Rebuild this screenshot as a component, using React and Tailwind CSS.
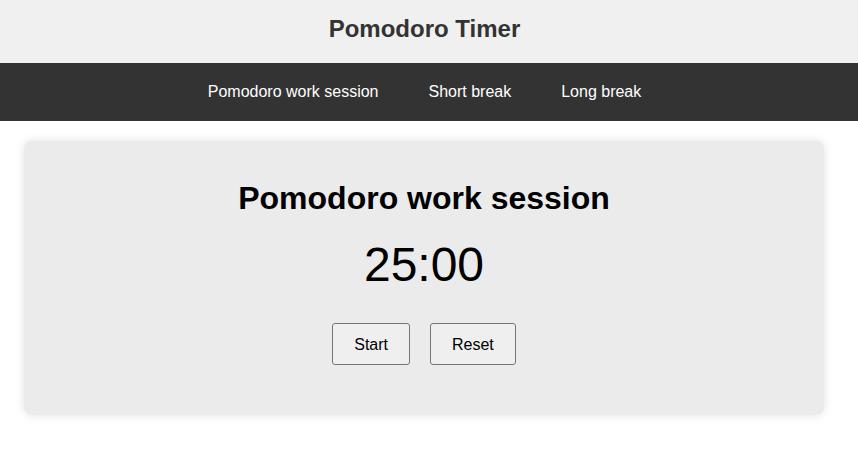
import React, { useState } from 'react';

const modes = [
  { key: 'work', label: 'Pomodoro work session', minutes: 25 },
  { key: 'short', label: 'Short break', minutes: 5 },
  { key: 'long', label: 'Long break', minutes: 15 },
];

const fmt = (s) => {
  const m = Math.floor(s / 60);
  const r = s % 60;
  return `${String(m).padStart(2, '0')}:${String(r).padStart(2, '0')}`;
};

export default function App() {
  const [mode, setMode] = useState(modes[0]);
  const [left, setLeft] = useState(modes[0].minutes * 60);

  const pick = (m) => {
    setMode(m);
    setLeft(m.minutes * 60);
  };

  return (
    <div className="min-h-screen bg-white font-['Liberation_Sans',Arial,sans-serif] text-black">
      {/* header */}
      <header className="h-[63px] bg-[#f0f0f0] pt-[15px] pr-[9px] text-center">
        <h1 className="text-[24px] leading-[28px] font-bold text-[#333333]">Pomodoro Timer</h1>
      </header>

      {/* nav */}
      <nav className="h-[58px] bg-[#333333] pt-[17px]">
        <ul className="flex justify-center gap-[50px] pr-[9px]">
          {modes.map((m) => (
            <li key={m.key}>
              <a
                href="#"
                onClick={(e) => { e.preventDefault(); pick(m); }}
                className="text-[16px] leading-[18px] text-white"
              >
                {m.label}
              </a>
            </li>
          ))}
        </ul>
      </nav>

      {/* timer card */}
      <main className="ml-[24px] mt-[20px] w-[800px] rounded-[8px] bg-[#ebebeb] pt-[39px] pb-[50px] text-center shadow-[0_0_10px_rgba(0,0,0,0.12)]">
        <h2 className="text-[32px] leading-[37px] font-bold">{mode.label}</h2>
        <div className="mt-[20px] text-[48px] leading-[55px]">{fmt(left)}</div>
        <div className="mt-[31px] flex justify-center gap-[20px]">
          <button className="h-[42px] rounded-[3px] border border-[#767676] bg-[#efefef] px-[21px] text-[16px] leading-[19px]">
            Start
          </button>
          <button
            onClick={() => setLeft(mode.minutes * 60)}
            className="h-[42px] rounded-[3px] border border-[#767676] bg-[#efefef] px-[21px] text-[16px] leading-[19px]"
          >
            Reset
          </button>
        </div>
      </main>
    </div>
  );
}
